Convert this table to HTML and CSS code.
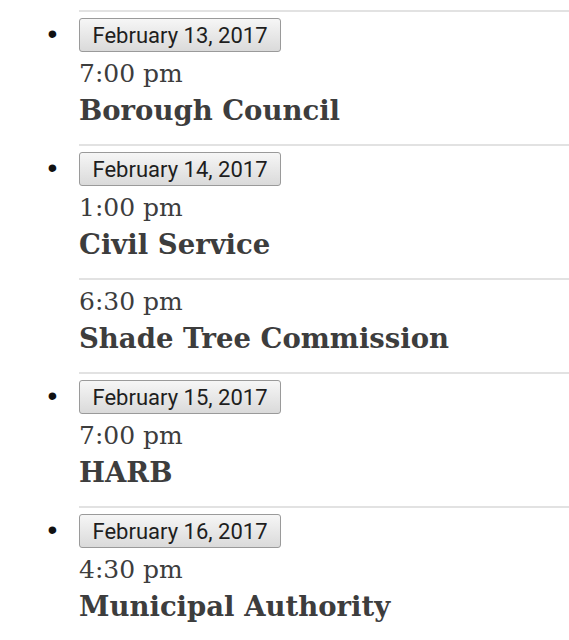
FILE: index.html
```html
<!DOCTYPE html>
<html>
<head>
<meta charset="utf-8">
<link rel="stylesheet" href="styles.css">
</head>
<body>
<ul class="days">
  <li class="day">
    <button class="date">February 13, 2017</button>
    <div class="event">
      <div class="time">7:00 pm</div>
      <div class="title">Borough Council</div>
    </div>
  </li>
  <li class="day">
    <button class="date">February 14, 2017</button>
    <div class="event">
      <div class="time">1:00 pm</div>
      <div class="title">Civil Service</div>
    </div>
    <div class="event more">
      <div class="time">6:30 pm</div>
      <div class="title">Shade Tree Commission</div>
    </div>
  </li>
  <li class="day">
    <button class="date">February 15, 2017</button>
    <div class="event">
      <div class="time">7:00 pm</div>
      <div class="title">HARB</div>
    </div>
  </li>
  <li class="day">
    <button class="date">February 16, 2017</button>
    <div class="event">
      <div class="time">4:30 pm</div>
      <div class="title">Municipal Authority</div>
    </div>
  </li>
</ul>
</body>
</html>
```

FILE: styles.css
```css
html, body {
  margin: 0;
  padding: 0;
  background: #ffffff;
}

.days {
  margin: 0;
  padding: 10px 0 0 79px;
  list-style: disc;
  font-family: "DejaVu Serif", serif;
  color: #3d3d3d;
}

.day {
  border-top: 2px solid #e2e2e2;
  padding-top: 6px;
  font-size: 24px;
  line-height: 0;
}

.day::marker {
  content: "\2022\2002\00a0";
  font-family: "Liberation Sans", sans-serif;
  font-size: 28px;
  color: #111;
}

.date {
  display: block;
  box-sizing: border-box;
  width: 202px;
  height: 34px;
  margin: 0;
  padding: 0;
  font-family: Roboto, "Noto Sans", sans-serif;
  font-size: 22px;
  line-height: normal;
  color: #1e1e1e;
  background: linear-gradient(#f6f6f6, #dadada);
  border: 1px solid #9a9a9a;
  border-radius: 3px;
}

.event {
  padding-bottom: 15px;
}

.event.more {
  border-top: 2px solid #e2e2e2;
}

.time {
  font-size: 25px;
  line-height: 36px;
  padding-top: 4px;
}

.title {
  font-size: 27.5px;
  line-height: 37px;
  font-weight: bold;
}
```
